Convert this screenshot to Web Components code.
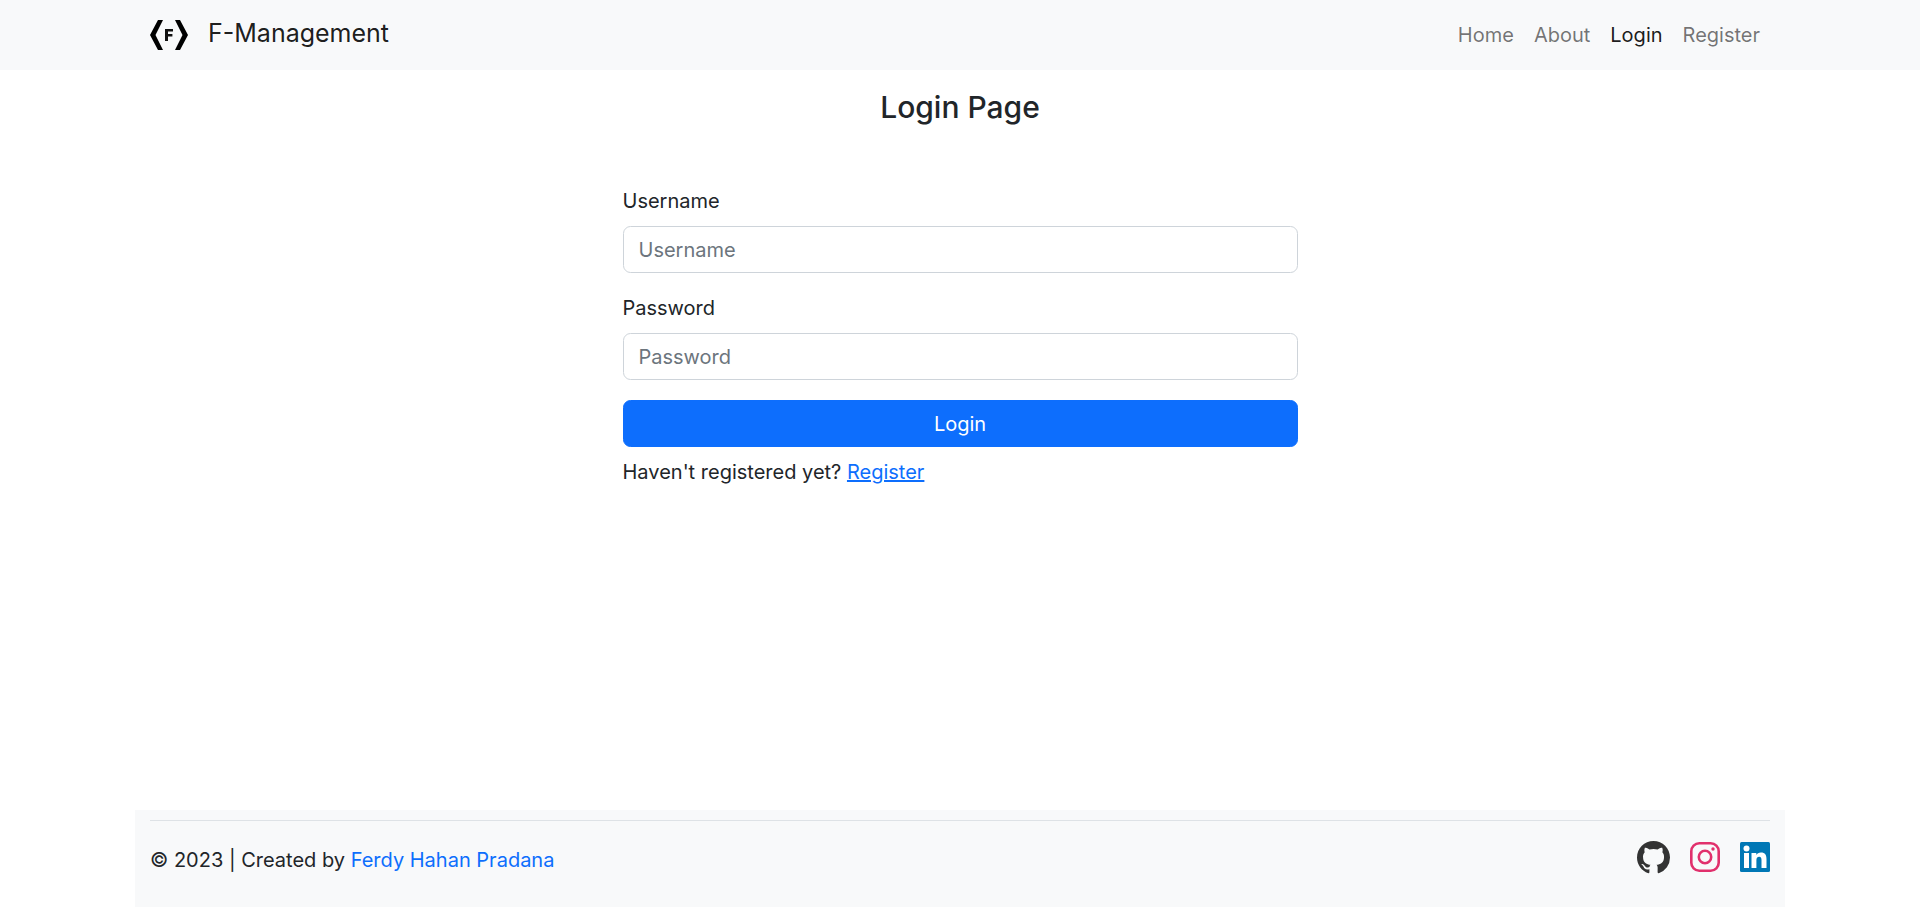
<!DOCTYPE html>
<html lang="en">
<head>
<meta charset="utf-8">
<title>Login Page</title>
<style>
  html, body { margin: 0; height: 100%; }
  body {
    font-family: Inter, "Liberation Sans", sans-serif;
    font-size: 20px;
    line-height: 30px;
    color: #212529;
    background: #fff;
  }
  #app { min-height: 907px; display: flex; flex-direction: column; }
</style>
</head>
<body>
<div id="app">
  <app-navbar></app-navbar>
  <login-form></login-form>
  <app-footer></app-footer>
</div>

<script>
class AppNavbar extends HTMLElement {
  constructor() {
    super();
    const shadowRoot = this.attachShadow({ mode: 'open' });
    shadowRoot.innerHTML = `
      <style>
        :host { display: block; background: #f8f9fa; }
        .inner { width: 1620px; height: 70px; margin: 0 auto; display: flex; align-items: center; justify-content: space-between; }
        .brand { display: flex; align-items: center; gap: 20px; font-size: 25px; line-height: 26px; padding-bottom: 4px; color: rgba(0,0,0,.9); }
        svg { width: 38px; height: 30px; display: block; margin-top: 4px; }
        nav { display: flex; }
        a { padding: 0 10px; color: rgba(0,0,0,.55); text-decoration: none; }
        a.active { color: rgba(0,0,0,.9); }
      </style>
      <div class="inner">
        <div class="brand">
          <svg viewBox="0 0 38 30">
            <path fill="#000" d="M8 0h5L5.500 15 13 30H8L0 15zM30 0h-5l7.500 15L25 30h5l8-15z"/>
            <path fill="#111" d="M15 9h8v2.600h-5V14h4.400v2.500H18V21h-3z"/>
          </svg>
          <span>F-Management</span>
        </div>
        <nav>
          <a href="#">Home</a>
          <a href="#">About</a>
          <a href="#" class="active">Login</a>
          <a href="#">Register</a>
        </nav>
      </div>
    `;
  }
}

class LoginForm extends HTMLElement {
  constructor() {
    super();
    const shadowRoot = this.attachShadow({ mode: 'open' });
    shadowRoot.innerHTML = `
      <style>
        :host { display: block; flex: 1; }
        h3 { margin: 15px 0 0; font-size: 30px; line-height: 44px; font-weight: 500; text-align: center; }
        form { width: 675px; margin: 57px auto 0; }
        label { display: block; margin-bottom: 10px; }
        input {
          display: block; box-sizing: border-box; width: 100%; height: 47px;
          padding: 0 15px; margin-bottom: 20px;
          font: inherit; color: #212529; background: #fff;
          border: 1px solid #ced4da; border-radius: 7.500px; outline: none;
        }
        input::placeholder { color: #6c757d; opacity: 1; }
        button {
          display: block; width: 100%; height: 47px; padding: 0;
          font: inherit; color: #fff; background: #0d6efd;
          border: 1px solid #0d6efd; border-radius: 7.500px;
        }
        p { margin: 10px 0 0; }
        a { color: #0d6efd; }
      </style>
      <h3>Login Page</h3>
      <form onsubmit="return false">
        <label for="u">Username</label>
        <input id="u" type="text" placeholder="Username">
        <label for="p">Password</label>
        <input id="p" type="password" placeholder="Password">
        <button type="submit">Login</button>
        <p>Haven't registered yet? <a href="#">Register</a></p>
      </form>
    `;
  }
}

class AppFooter extends HTMLElement {
  constructor() {
    super();
    const shadowRoot = this.attachShadow({ mode: 'open' });
    shadowRoot.innerHTML = `
      <style>
        :host { display: block; width: 1650px; height: 97px; margin: 0 auto; background: #f8f9fa; box-sizing: border-box; padding: 10px 15px 0; }
        .row { border-top: 1px solid #dee2e6; display: flex; justify-content: space-between; align-items: flex-start; }
        .copy { margin-top: 24px; }
        a { color: #0d6efd; text-decoration: none; }
        .icons { display: flex; gap: 20px; margin-top: 20px; }
        svg { width: 33px; height: 33px; display: block; }
        .ig { width: 30px; height: 30px; margin: 1px 0; }
        .li { width: 30px; height: 30px; margin: 1px 0; }
      </style>
      <div class="row">
        <div class="copy">&copy; 2023 | Created by <a href="#">Ferdy Hahan Pradana</a></div>
        <div class="icons">
          <svg viewBox="0 0 16 16"><path fill="#333" d="M8 0C3.580 0 0 3.580 0 8c0 3.540 2.290 6.530 5.470 7.590.4.070.55-.17.55-.38 0-.19-.01-.82-.01-1.490-2.010.37-2.530-.49-2.690-.94-.09-.23-.48-.94-.82-1.130-.28-.15-.68-.52-.01-.53.63-.01 1.080.58 1.230.82.720 1.210 1.870.87 2.330.66.070-.52.280-.87.510-1.070-1.780-.2-3.640-.89-3.640-3.950 0-.87.310-1.590.820-2.150-.08-.2-.36-1.020.08-2.120 0 0 .67-.21 2.200.82.640-.18 1.320-.27 2-.27s1.360.09 2 .27c1.530-1.040 2.200-.82 2.200-.82.440 1.100.16 1.920.08 2.120.51.560.82 1.270.82 2.150 0 3.070-1.870 3.750-3.650 3.950.290.250.540.730.540 1.480 0 1.070-.01 1.930-.01 2.200 0 .21.150.460.550.380A8.010 8.010 0 0 0 16 8c0-4.420-3.580-8-8-8z"/></svg>
          <svg class="ig" viewBox="0 0 30 30" fill="none" stroke="#e1306c" stroke-width="2.600"><rect x="1.300" y="1.300" width="27.400" height="27.400" rx="8"/><circle cx="15" cy="15" r="6.200"/><circle cx="23" cy="7" r="1.700" fill="#e1306c" stroke="none"/></svg>
          <svg class="li" viewBox="0 0 30 30"><rect width="30" height="30" rx="1.500" fill="#0077b5"/><circle cx="6.500" cy="6.500" r="3" fill="#fff"/><rect x="4" y="11" width="5" height="15" fill="#fff"/><path fill="#fff" d="M11.500 11h4.800v2.100c.8-1.400 2.400-2.500 4.600-2.500 4.300 0 5.600 2.700 5.600 6.700V26h-5v-7.800c0-2-.5-3.400-2.300-3.400-2 0-2.800 1.500-2.800 3.400V26h-4.900z"/></svg>
        </div>
      </div>
    `;
  }
}

customElements.define('app-navbar', AppNavbar);
customElements.define('login-form', LoginForm);
customElements.define('app-footer', AppFooter);
</script>
</body>
</html>
